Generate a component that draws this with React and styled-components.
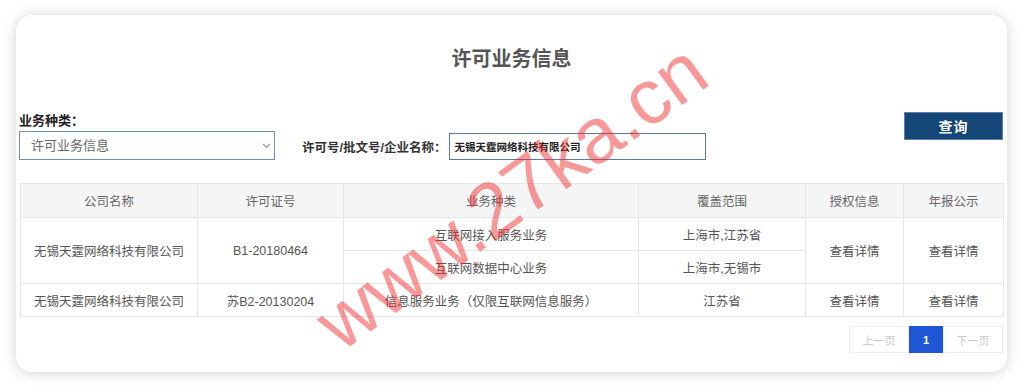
import React from "react";
import styled, { createGlobalStyle } from "styled-components";

const GlobalStyle = createGlobalStyle`
  body {
    margin: 0;
    background: #fff;
    font-family: "Liberation Sans", "Noto Sans CJK SC", sans-serif;
  }
`;

const rows = [
  {
    company: "无锡天霆网络科技有限公司",
    license: "B1-20180464",
    items: [
      { kind: "互联网接入服务业务", area: "上海市,江苏省" },
      { kind: "互联网数据中心业务", area: "上海市,无锡市" },
    ],
  },
  {
    company: "无锡天霆网络科技有限公司",
    license: "苏B2-20130204",
    items: [{ kind: "信息服务业务（仅限互联网信息服务）", area: "江苏省" }],
  },
];

const columns = [
  { title: "公司名称", width: 177 },
  { title: "许可证号", width: 146 },
  { title: "业务种类", width: 295 },
  { title: "覆盖范围", width: 167 },
  { title: "授权信息", width: 98 },
  { title: "年报公示", width: 100 },
];

function LicenseTable() {
  return (
    <Table>
      <colgroup>
        {columns.map((c) => (
          <col key={c.title} style={{ width: c.width }} />
        ))}
      </colgroup>
      <thead>
        <tr>
          {columns.map((c) => (
            <Th key={c.title}>{c.title}</Th>
          ))}
        </tr>
      </thead>
      <tbody>
        {rows.map((r, idx) =>
          r.items.map((it, i) => (
            <tr key={idx + "-" + i}>
              {i === 0 ? (
                <>
                  <Td rowSpan={r.items.length}>{r.company}</Td>
                  <Td rowSpan={r.items.length}>{r.license}</Td>
                </>
              ) : null}
              <Td>{it.kind}</Td>
              <Td>{it.area}</Td>
              {i === 0 ? (
                <>
                  <Td rowSpan={r.items.length}>查看详情</Td>
                  <Td rowSpan={r.items.length}>查看详情</Td>
                </>
              ) : null}
            </tr>
          ))
        )}
      </tbody>
    </Table>
  );
}

export default function App() {
  return (
    <Page>
      <GlobalStyle />
      <Card>
        <Title>许可业务信息</Title>
        <FilterRow>
          <Field>
            <FieldLabel>业务种类：</FieldLabel>
            <SelectWrap>
              <Select defaultValue="许可业务信息">
                <option>许可业务信息</option>
              </Select>
              <Chevron width="9" height="6" viewBox="0 0 9 6">
                <path d="M1 1l3.5 3.5L8 1" fill="none" stroke="#999" strokeWidth="1.2" />
              </Chevron>
            </SelectWrap>
          </Field>
          <SearchGroup>
            <SearchLabel>许可号/批文号/企业名称：</SearchLabel>
            <SearchInput defaultValue="无锡天霆网络科技有限公司" />
          </SearchGroup>
          <QueryButton>查询</QueryButton>
        </FilterRow>
        <LicenseTable />
        <Pager>
          <PageBtn>上一页</PageBtn>
          <PageBtn active>1</PageBtn>
          <PageBtn>下一页</PageBtn>
        </Pager>
      </Card>
      <Watermark>www.27ka.cn</Watermark>
    </Page>
  );
}

const Page = styled.div`
  position: relative;
  width: 1024px;
  height: 388px;
  box-sizing: border-box;
  padding: 15px 17px 0 16px;
  overflow: hidden;
`;

const Card = styled.div`
  height: 357px;
  box-sizing: border-box;
  padding: 30px 4px 0;
  background: #fff;
  border-radius: 16px;
  box-shadow: 0 1px 14px rgba(0, 0, 0, 0.18);
`;

const Title = styled.h1`
  margin: 0;
  font-size: 20px;
  line-height: 28px;
  font-weight: bold;
  color: #555;
  text-align: center;
`;

const FilterRow = styled.div`
  display: flex;
  align-items: flex-end;
  margin-top: 39px;
`;

const Field = styled.div`
  display: flex;
  flex-direction: column;
`;

const FieldLabel = styled.label`
  font-size: 13px;
  line-height: 18px;
  font-weight: bold;
  color: #222;
  margin-left: -1px;
`;

const SelectWrap = styled.div`
  position: relative;
  margin-top: 1px;
`;

const Select = styled.select`
  appearance: none;
  width: 256px;
  height: 29px;
  box-sizing: border-box;
  margin: 0 0 0 -1px;
  padding: 0 0 0 11px;
  border: 1px solid #6f8cba;
  border-radius: 0;
  background: #fff;
  font-family: inherit;
  font-size: 13px;
  color: #666;
  outline: none;
`;

const Chevron = styled.svg`
  position: absolute;
  right: 4px;
  top: 12px;
`;

const SearchGroup = styled.div`
  display: flex;
  align-items: center;
  margin-left: 27px;
`;

const SearchLabel = styled.span`
  font-size: 12.5px;
  font-weight: bold;
  color: #333;
`;

const SearchInput = styled.input`
  width: 257px;
  height: 27px;
  box-sizing: border-box;
  margin-left: 3px;
  padding: 0 4px;
  border: 1px solid #5b7aa8;
  border-radius: 0;
  font-family: inherit;
  font-size: 10.5px;
  font-weight: bold;
  color: #222;
  outline: none;
`;

const QueryButton = styled.button`
  align-self: flex-start;
  margin-left: auto;
  width: 99px;
  height: 28px;
  border: 1px solid #5c7ea8;
  border-radius: 0;
  background: #144677;
  color: #fff;
  font-family: inherit;
  font-size: 14px;
  font-weight: bold;
  letter-spacing: 1px;
`;

const Table = styled.table`
  width: 983px;
  margin-top: 23px;
  border-collapse: collapse;
  table-layout: fixed;
`;

const Th = styled.th`
  height: 33px;
  padding: 0;
  border: 1px solid #e6e6e6;
  background: #f5f5f5;
  font-size: 12.5px;
  font-weight: normal;
  color: #666;
  text-align: center;
`;

const Td = styled.td`
  height: 32px;
  padding: 0;
  border: 1px solid #e6e6e6;
  font-size: 12.5px;
  color: #555;
  text-align: center;
`;

const Pager = styled.div`
  display: flex;
  justify-content: flex-end;
  margin-top: 9px;
`;

const PageBtn = styled.div`
  display: flex;
  align-items: center;
  justify-content: center;
  width: ${(p) => (p.active ? "34px" : "60px")};
  height: 27px;
  box-sizing: border-box;
  border: 1px solid ${(p) => (p.active ? "#1f57d6" : "#ededed")};
  background: ${(p) => (p.active ? "#1f57d6" : "#fff")};
  color: ${(p) => (p.active ? "#fff" : "#c8c8c8")};
  font-size: 11px;
  font-weight: ${(p) => (p.active ? "bold" : "normal")};
`;

const Watermark = styled.span`
  position: absolute;
  left: 511px;
  top: 196px;
  transform: translate(-50%, -50%) rotate(-36deg);
  font-family: "Liberation Sans", sans-serif;
  font-size: 78px;
  line-height: 1;
  color: rgba(240, 40, 40, 0.48);
  white-space: nowrap;
  pointer-events: none;
`;
